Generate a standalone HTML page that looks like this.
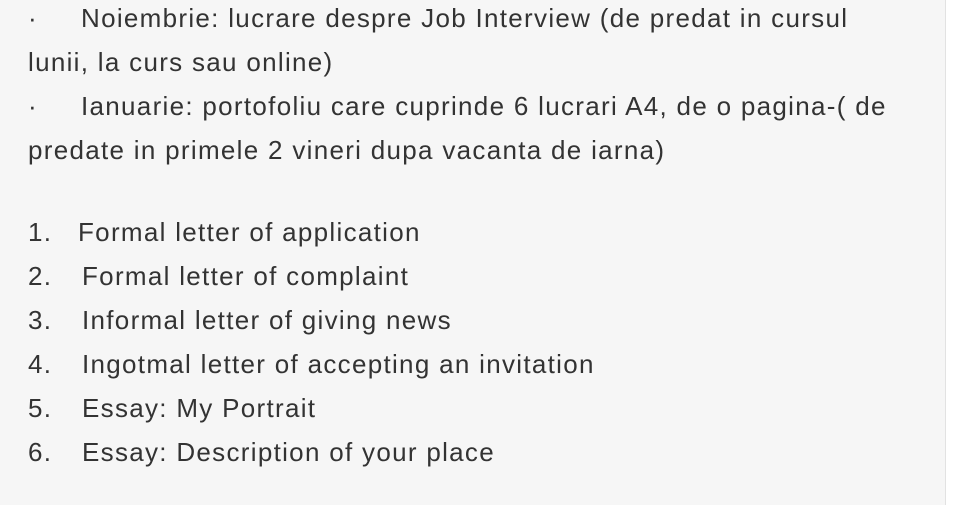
<!DOCTYPE html>
<html><head><meta charset="utf-8"><style>
html,body{margin:0;padding:0;background:#fff;}
body{width:956px;height:506px;position:relative;overflow:hidden;}
.bg{position:absolute;left:0;top:0;width:945px;height:505px;background:#f6f6f6;border-right:1px solid #e2e2e2;}
.l{position:absolute;font-family:"Liberation Sans",sans-serif;font-size:26px;letter-spacing:1.3px;color:#333;line-height:44px;white-space:nowrap;}
</style></head><body>
<div class="bg"></div>
<div class="l" style="left:28px;top:-4px">·</div>
<div class="l" style="left:81px;top:-4px">Noiembrie: lucrare despre Job Interview (de predat in cursul</div>
<div class="l" style="left:28px;top:40px">lunii, la curs sau online)</div>
<div class="l" style="left:28px;top:84px">·</div>
<div class="l" style="left:81px;top:84px">Ianuarie: portofoliu care cuprinde 6 lucrari A4, de o pagina-( de</div>
<div class="l" style="left:28px;top:128px">predate in primele 2 vineri dupa vacanta de iarna)</div>
<div class="l" style="left:28px;top:210px">1.</div><div class="l" style="left:78px;top:210px">Formal letter of application</div>
<div class="l" style="left:28px;top:254px">2.</div><div class="l" style="left:82px;top:254px">Formal letter of complaint</div>
<div class="l" style="left:28px;top:298px">3.</div><div class="l" style="left:82px;top:298px">Informal letter of giving news</div>
<div class="l" style="left:28px;top:342px">4.</div><div class="l" style="left:82px;top:342px">Ingotmal letter of accepting an invitation</div>
<div class="l" style="left:28px;top:386px">5.</div><div class="l" style="left:82px;top:386px">Essay: My Portrait</div>
<div class="l" style="left:28px;top:430px">6.</div><div class="l" style="left:82px;top:430px">Essay: Description of your place</div>
</body></html>
